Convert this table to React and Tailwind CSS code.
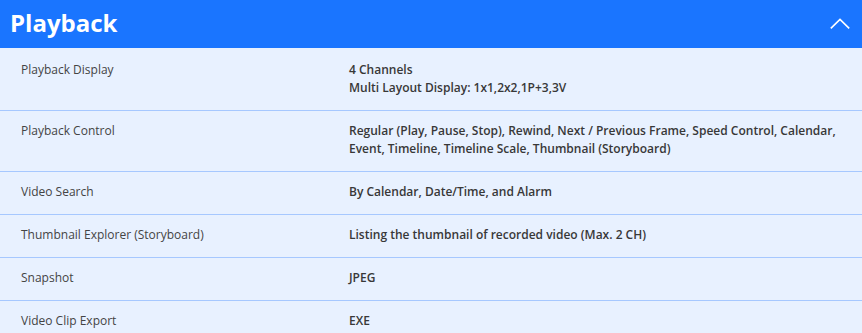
import React from 'react';

const rows = [
  { label: 'Playback Display', value: ['4 Channels', 'Multi Layout Display: 1x1,2x2,1P+3,3V'] },
  {
    label: 'Playback Control',
    value: [
      'Regular (Play, Pause, Stop), Rewind, Next / Previous Frame, Speed Control, Calendar, Event, Timeline, Timeline Scale, Thumbnail (Storyboard)',
    ],
  },
  { label: 'Video Search', value: ['By Calendar, Date/Time, and Alarm'] },
  { label: 'Thumbnail Explorer (Storyboard)', value: ['Listing the thumbnail of recorded video (Max. 2 CH)'] },
  { label: 'Snapshot', value: ['JPEG'] },
  { label: 'Video Clip Export', value: ['EXE'] },
];

export default function App() {
  return (
    <div className="w-[862px] h-[333px] overflow-hidden bg-[#e8f1ff] font-['Open_Sans',sans-serif]">
      {/* Section header */}
      <div className="h-12 flex items-center justify-between bg-[#1a75ff] pl-[10px] pr-[12px]">
        <h2 className="text-[24px] font-bold text-white leading-none pb-[2px]">Playback</h2>
        <svg width="20" height="11" viewBox="0 0 20 11" fill="none" stroke="white" strokeWidth="1.6" className="-mt-[2px]">
          <path d="M0.8 10.4 L10 1.4 L19.2 10.4" />
        </svg>
      </div>

      {/* Spec rows */}
      <div>
        {rows.map((row, i) => (
          <div
            key={row.label}
            className={`flex border-b border-[#a6c8ff] pb-[13px] text-[12px] leading-[18px] ${i === 0 ? 'pt-[13px]' : 'pt-[11px]'}`}
          >
            <div className="w-[349px] shrink-0 pl-[21px] text-[#444]">{row.label}</div>
            <div className="flex-1 pr-6 font-semibold text-[#383838]">
              {row.value.map((line) => (
                <div key={line}>{line}</div>
              ))}
            </div>
          </div>
        ))}
      </div>
    </div>
  );
}
